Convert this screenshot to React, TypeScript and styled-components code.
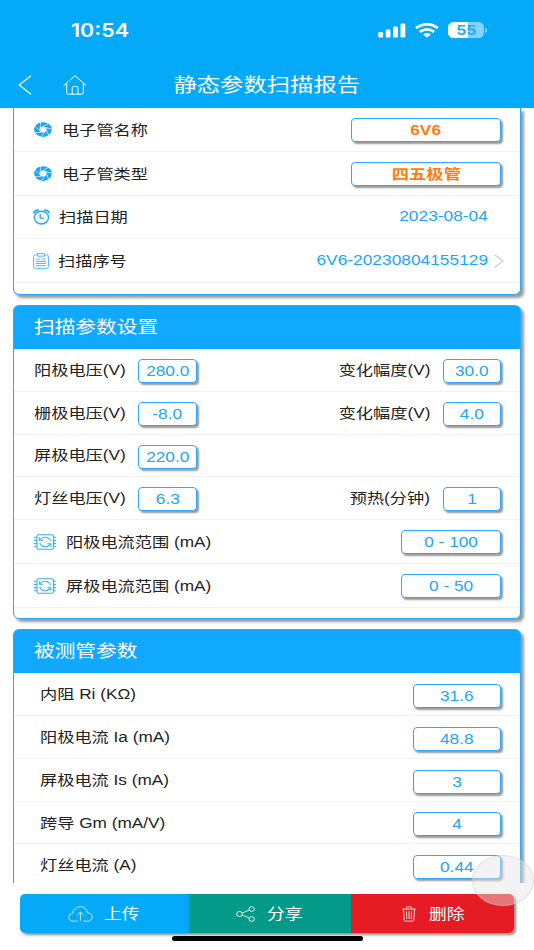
import React from 'react';
import styled, { createGlobalStyle } from 'styled-components';

const STRETCH = 1.2165;

const GlobalStyle = createGlobalStyle`
  * { box-sizing: border-box; }
  html, body { margin: 0; padding: 0; background: #fff; }
  body { font-family: "Liberation Sans", "Noto Sans CJK SC", sans-serif; overflow: hidden; }
`;

const Screen = styled.div`
  width: 534px;
  height: 950px;
  display: flex;
  flex-direction: column;
  background: #fff;
  overflow: hidden;
`;

/* Wide lettering used across the interface */
const Wide = styled.span<{ $from?: string; $k?: number }>`
  display: inline-block;
  white-space: nowrap;
  transform: scaleX(${(p) => p.$k ?? STRETCH});
  transform-origin: ${(p) => p.$from ?? 'left'} center;
`;

const TopBar = styled.header`
  height: 108px;
  flex: none;
  background: #04a9f7;
  color: #fff;
`;

const StatusBar = styled.div`
  height: 60px;
  display: flex;
  align-items: center;
  padding: 0 47px 0 71px;
`;

const Clock = styled.div`
  flex: 1;
  font: 600 18.4px/24px Inter, sans-serif;
`;

const StatusIcons = styled.div`
  display: flex;
  align-items: center;
  gap: 9px;
  svg { display: block; }
`;

const Battery = styled.div`
  display: flex;
  align-items: center;
  gap: 1px;
`;

const BatteryBody = styled.div`
  width: 36px;
  height: 16px;
  border-radius: 5.5px;
  background: linear-gradient(to right, #fff 55%, #84d3fb 55%);
  color: #19aef6;
  text-align: center;
  font: 700 13px/16px Inter, sans-serif;
`;

const BatteryTip = styled.div`
  width: 2px;
  height: 5px;
  border-radius: 0 2px 2px 0;
  background: #84d3fb;
`;

const NavBar = styled.nav`
  height: 48px;
  display: grid;
  grid-template-columns: 120px 1fr 120px;
  align-items: center;
`;

const NavIcons = styled.div`
  display: flex;
  align-items: center;
  gap: 31px;
  padding-left: 18px;
`;

const Title = styled.h1`
  margin: 0;
  padding-top: 2px;
  text-align: center;
  font-size: 19.2px;
  font-weight: 400;
  line-height: 48px;
`;

const Content = styled.main`
  height: 775px;
  flex: none;
  padding: 0 13px;
  overflow: hidden;
  display: flex;
  flex-direction: column;
  gap: 10px;
`;

const Card = styled.section<{ $h: number; $open?: boolean }>`
  flex: none;
  height: ${(p) => p.$h}px;
  border: 1px solid #2aa9f8;
  ${(p) => p.$open && 'border-top: 0;'}
  border-radius: ${(p) => (p.$open ? '0 0 6px 6px' : '6px')};
  box-shadow: 3px 3px 3px #999;
  background: #fff;
`;

const CardHeader = styled.h2`
  margin: 0;
  height: 43px;
  padding-left: 20px;
  background: #11a8ff;
  border-radius: 4px 4px 0 0;
  color: #fff;
  font-size: 17px;
  font-weight: 400;
  line-height: 44px;
`;

const Row = styled.div<{ $h: number; $indent?: number; $end?: number }>`
  height: ${(p) => p.$h}px;
  display: flex;
  align-items: center;
  padding: 0 ${(p) => p.$end ?? 19}px 0 ${(p) => p.$indent ?? 20}px;
  border-bottom: 1px solid #f1f1f1;
`;

const IconSlot = styled.div<{ $w: number }>`
  width: ${(p) => p.$w}px;
  flex: none;
  svg { display: block; }
`;

const Label = styled.div<{ $w?: number; $right?: boolean; $up?: number }>`
  ${(p) => (p.$w ? `width: ${p.$w}px;` : 'flex: 1;')}
  text-align: ${(p) => (p.$right ? 'right' : 'left')};
  padding-right: ${(p) => (p.$right ? 13 : 0)}px;
  padding-bottom: ${(p) => p.$up ?? 0}px;
  color: #222;
  font-size: 14.15px;
  line-height: 20px;
`;

const ValueBox = styled.div<{ $w: number; $strong?: boolean; $drop?: number }>`
  width: ${(p) => p.$w}px;
  height: 24px;
  flex: none;
  margin-top: ${(p) => p.$drop ?? 0}px;
  border: 1px solid #2aa9f8;
  border-radius: 4px;
  box-shadow: 2px 2px 2px #999;
  background: #fff;
  color: ${(p) => (p.$strong ? '#ff7d0a' : '#1ba6fb')};
  text-align: center;
  font-size: 14.2px;
  font-weight: ${(p) => (p.$strong ? 700 : 400)};
  line-height: 23px;
`;

const PlainValue = styled.div<{ $end: number }>`
  margin-right: ${(p) => p.$end}px;
  padding-bottom: 2px;
  color: #1ba6fb;
  font-size: 14.25px;
  line-height: 20px;
`;

const Footer = styled.footer`
  flex: 1;
  padding: 11px 20px 0;
  display: flex;
  flex-direction: column;
  align-items: center;
  position: relative;
`;

const Actions = styled.div`
  width: 494px;
  height: 39px;
  flex: none;
  display: flex;
  border-radius: 5px;
  overflow: hidden;
  box-shadow: 2px 2px 3px #888;
`;

const Action = styled.button<{ $w: number; $bg: string; $pad: number; $gap: number }>`
  width: ${(p) => p.$w}px;
  display: flex;
  align-items: center;
  gap: ${(p) => p.$gap}px;
  padding: 0 0 0 ${(p) => p.$pad}px;
  border: 0;
  background: ${(p) => p.$bg};
  color: #fff;
  font: 400 14.6px/20px "Liberation Sans", "Noto Sans CJK SC", sans-serif;
`;

const HomeIndicator = styled.div`
  width: 191px;
  height: 5px;
  margin-top: 3px;
  border-radius: 3px;
  background: #000;
`;

const TouchDot = styled.div`
  position: absolute;
  top: -28px;
  right: 0;
  width: 62px;
  height: 51px;
  border-radius: 50%;
  border: 1px solid rgba(205, 205, 205, 0.5);
  background: rgba(228, 228, 228, 0.45);
`;

const BackIcon = () => (
  <svg width="14" height="20" viewBox="0 0 14 20" fill="none" stroke="#fff" strokeWidth="1.1">
    <path d="M13 0.8 L1.2 10 L13 19.2" />
  </svg>
);

const HomeIcon = () => (
  <svg width="24" height="20" viewBox="0 0 24 20" fill="none" stroke="#fff" strokeWidth="1" strokeLinejoin="round" strokeLinecap="round">
    <path d="M1 10.3 L12 0.8 L23 10.3" />
    <path d="M3.7 9 V17.6 Q3.7 19.2 5.4 19.2 H9.2 V12.8 Q9.2 11.5 10.5 11.5 H13.7 Q15 11.5 15 12.8 V19.2 H18.6 Q20.3 19.2 20.3 17.6 V9" />
    <path d="M9.2 19.2 H15" />
  </svg>
);

const SignalIcon = () => (
  <svg width="28" height="15" viewBox="0 0 28 15" fill="#fff">
    <rect x="0.3" y="9" width="4.8" height="5.5" rx="1.3" />
    <rect x="7.7" y="6.5" width="4.8" height="8" rx="1.3" />
    <rect x="15.1" y="3.6" width="4.8" height="10.9" rx="1.3" />
    <rect x="22.5" y="0.4" width="4.8" height="14.1" rx="1.3" />
  </svg>
);

const WifiIcon = () => (
  <svg width="24" height="15" viewBox="0 0 24 15" fill="none" stroke="#fff" strokeWidth="2.7">
    <path d="M1 5 Q12 -2.6 23 5" />
    <path d="M4.8 8.9 Q12 3.8 19.2 8.9" />
    <path d="M12 14.4 L8 11.5 Q12 8.7 16 11.5 Z" fill="#fff" stroke="none" />
  </svg>
);

const ApertureIcon = () => (
  <svg width="18" height="15" viewBox="-12 -12 24 24" preserveAspectRatio="none">
    <circle r="11.8" fill="#16a5fa" />
    <circle r="4.8" fill="#fff" />
    {[10, 61, 113, 164, 216, 267, 319].map((a) => (
      <path key={a} d="M-1 -4.8 L5.5 -10.6" stroke="#fff" strokeWidth="0.9" transform={`rotate(${a})`} />
    ))}
  </svg>
);

const AlarmIcon = () => (
  <svg width="17" height="16" viewBox="0 0 17 16" fill="none" stroke="#22a9fa" strokeLinecap="round">
    <ellipse cx="8.4" cy="8.6" rx="7.1" ry="6.4" strokeWidth="1.4" />
    <path d="M1 3.6 Q2 1 5 1.1 M15.8 3.6 Q14.8 1 11.8 1.1" strokeWidth="1.8" />
    <path d="M7.2 5.4 V9.2 H10.8" strokeWidth="1.3" />
  </svg>
);

const ClipboardIcon = () => (
  <svg width="16" height="16" viewBox="0 0 16 16" fill="none" stroke="#4db9fb" strokeWidth="1">
    <path d="M4.4 1.8 H2.6 Q0.6 1.8 0.6 3.4 V13.8 Q0.6 15.4 2.6 15.4 H13.4 Q15.4 15.4 15.4 13.8 V3.4 Q15.4 1.8 13.4 1.8 H11.6" />
    <path d="M4.6 0.6 H11.4 V3.2 H4.6 Z" />
    <path d="M2.8 6.1 H7.5 M9 6.1 H12 M2.8 8.5 H13 M2.8 10.5 H13 M2.8 12.7 H13" />
  </svg>
);

const ChipIcon = () => (
  <svg width="22" height="16" viewBox="0 0 22 16" fill="none" stroke="#35b0fa" strokeWidth="1.1">
    <rect x="3" y="0.7" width="16.4" height="14.6" rx="1.6" />
    <path d="M0 3.2 H3 M0 6.4 H3 M0 9.6 H3 M0 12.8 H3 M19.4 3.2 H22 M19.4 6.4 H22 M19.4 9.6 H22 M19.4 12.8 H22" />
    <path d="M5.7 5.9 Q8 3.2 11.2 3.3 Q15.4 3.5 16.5 7.2 M16.6 10.1 Q14.4 12.7 11.2 12.7 Q6.9 12.5 5.8 8.8" />
    <path d="M5.4 3.2 V6.2 H9 M16.9 12.8 V9.8 H13.4" />
  </svg>
);

const ChevronIcon = () => (
  <svg width="10" height="14" viewBox="0 0 10 14" fill="none" stroke="#ccc" strokeWidth="1.1">
    <path d="M0.8 0.8 L9 7 L0.8 13.2" />
  </svg>
);

const CloudIcon = () => (
  <svg width="25" height="16" viewBox="0 0 25 16" fill="none" stroke="#cdeefd" strokeWidth="0.9" strokeLinecap="round">
    <path d="M9.3 15.2 H5.3 Q0.8 14.8 0.6 11.1 Q0.8 7.9 4.7 7.2 Q4.6 3.9 7.2 3.4 Q9 0.6 12.4 0.6 Q18.6 1 19.2 6.6 Q24.1 7.3 24.3 10.9 Q24.1 14.8 19.8 15.2 H15.6" />
    <path d="M12.4 14.5 V6.2 M9.5 8.8 L12.4 6.2 L15.3 8.8" />
  </svg>
);

const ShareIcon = () => (
  <svg width="19" height="16" viewBox="0 0 19 16" fill="none" stroke="#d6f0ec" strokeWidth="1">
    <ellipse cx="3.5" cy="8" rx="2.9" ry="2.5" />
    <ellipse cx="15.7" cy="3" rx="2.7" ry="2.3" />
    <ellipse cx="15.7" cy="13" rx="2.7" ry="2.3" />
    <path d="M6.2 7 L13.2 4 M6.2 9 L13.2 12" />
  </svg>
);

const TrashIcon = () => (
  <svg width="14" height="16" viewBox="0 0 14 16" fill="none" stroke="#fbd5d6" strokeWidth="1">
    <path d="M0.3 3.1 H13.7 M4.4 3 V1.8 Q4.4 0.8 5.4 0.8 H8.6 Q9.6 0.8 9.6 1.8 V3" />
    <path d="M1.5 3.2 L2.2 14 Q2.3 15.2 3.6 15.2 H10.4 Q11.7 15.2 11.8 14 L12.5 3.2" />
    <path d="M4.5 5.3 L4.8 13 M7 5.3 V13 M9.5 5.3 L9.2 13" />
  </svg>
);

const settings = [
  { h: 43, label: '阳极电压(V)', value: '280.0', side: '变化幅度(V)', sideValue: '30.0' },
  { h: 43, label: '栅极电压(V)', value: '-8.0', side: '变化幅度(V)', sideValue: '4.0' },
  { h: 42, label: '屏极电压(V)', value: '220.0' },
  { h: 43, label: '灯丝电压(V)', value: '6.3', side: '预热(分钟)', sideValue: '1' },
];

const ranges = [
  { label: '阳极电流范围 (mA)', value: '0 - 100' },
  { label: '屏极电流范围 (mA)', value: '0 - 50' },
];

const measured = [
  { h: 43, label: '内阻 Ri (KΩ)', value: '31.6' },
  { h: 43, label: '阳极电流 Ia (mA)', value: '48.8' },
  { h: 43, label: '屏极电流 Is (mA)', value: '3' },
  { h: 42, label: '跨导 Gm (mA/V)', value: '4' },
  { h: 43, label: '灯丝电流 (A)', value: '0.44' },
];

export default function App() {
  return (
    <>
      <GlobalStyle />
      <Screen>
        <TopBar>
          <StatusBar>
            <Clock><Wide $k={1.17}>10:54</Wide></Clock>
            <StatusIcons>
              <SignalIcon />
              <WifiIcon />
              <Battery>
                <BatteryBody><Wide $from="center">55</Wide></BatteryBody>
                <BatteryTip />
              </Battery>
            </StatusIcons>
          </StatusBar>
          <NavBar>
            <NavIcons>
              <BackIcon />
              <HomeIcon />
            </NavIcons>
            <Title><Wide $from="center">静态参数扫描报告</Wide></Title>
          </NavBar>
        </TopBar>

        <Content>
          <Card $h={187} $open>
            <Row $h={44}>
              <IconSlot $w={28}><ApertureIcon /></IconSlot>
              <Label><Wide>电子管名称</Wide></Label>
              <ValueBox $w={150} $strong><Wide $from="center">6V6</Wide></ValueBox>
            </Row>
            <Row $h={44}>
              <IconSlot $w={28}><ApertureIcon /></IconSlot>
              <Label><Wide>电子管类型</Wide></Label>
              <ValueBox $w={150} $strong><Wide $from="center">四五极管</Wide></ValueBox>
            </Row>
            <Row $h={43} $indent={19}>
              <IconSlot $w={26}><AlarmIcon /></IconSlot>
              <Label><Wide>扫描日期</Wide></Label>
              <PlainValue $end={13}><Wide $from="right">2023-08-04</Wide></PlainValue>
            </Row>
            <Row $h={44} $indent={19} $end={16}>
              <IconSlot $w={25}><ClipboardIcon /></IconSlot>
              <Label><Wide>扫描序号</Wide></Label>
              <PlainValue $end={6}><Wide $from="right">6V6-20230804155129</Wide></PlainValue>
              <ChevronIcon />
            </Row>
          </Card>

          <Card $h={314}>
            <CardHeader><Wide>扫描参数设置</Wide></CardHeader>
            {settings.map((s) => (
              <Row key={s.label} $h={s.h}>
                <Label $w={104} $up={1}><Wide>{s.label}</Wide></Label>
                <ValueBox $w={59} $drop={2}><Wide $from="center">{s.value}</Wide></ValueBox>
                {s.side && (
                  <>
                    <Label $right $up={1}><Wide $from="right">{s.side}</Wide></Label>
                    <ValueBox $w={58} $drop={2}><Wide $from="center">{s.sideValue}</Wide></ValueBox>
                  </>
                )}
              </Row>
            ))}
            {ranges.map((r) => (
              <Row key={r.label} $h={44}>
                <IconSlot $w={32}><ChipIcon /></IconSlot>
                <Label><Wide>{r.label}</Wide></Label>
                <ValueBox $w={100} $drop={1}><Wide $from="center">{r.value}</Wide></ValueBox>
              </Row>
            ))}
          </Card>

          <Card $h={290}>
            <CardHeader><Wide>被测管参数</Wide></CardHeader>
            {measured.map((m) => (
              <Row key={m.label} $h={m.h} $indent={26}>
                <Label><Wide>{m.label}</Wide></Label>
                <ValueBox $w={88} $drop={3}><Wide $from="center">{m.value}</Wide></ValueBox>
              </Row>
            ))}
          </Card>
        </Content>

        <Footer>
          <Actions>
            <Action $w={169} $bg="#04a9f7" $pad={48} $gap={11}>
              <CloudIcon /><Wide>上传</Wide>
            </Action>
            <Action $w={162} $bg="#039a8a" $pad={47} $gap={12}>
              <ShareIcon /><Wide>分享</Wide>
            </Action>
            <Action $w={163} $bg="#e61c24" $pad={51} $gap={13}>
              <TrashIcon /><Wide>删除</Wide>
            </Action>
          </Actions>
          <HomeIndicator />
          <TouchDot />
        </Footer>
      </Screen>
    </>
  );
}
